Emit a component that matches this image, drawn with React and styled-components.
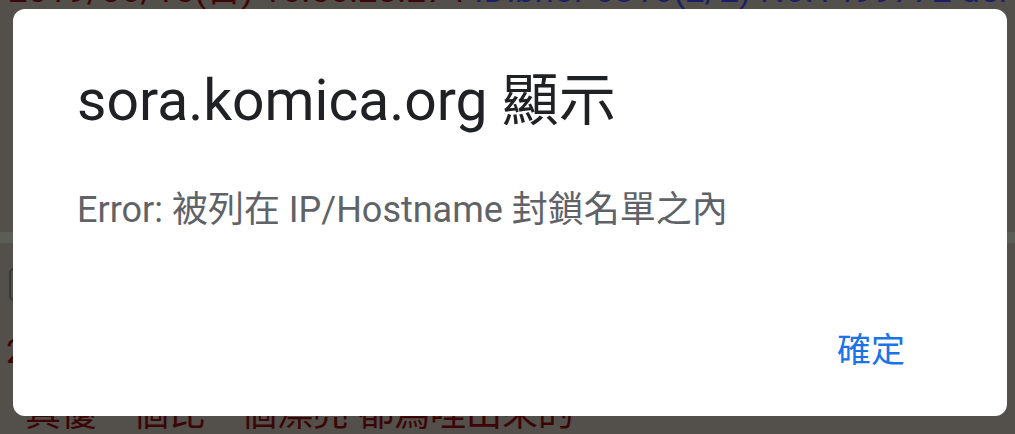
import React from "react";
import styled, { createGlobalStyle } from "styled-components";

const Global = createGlobalStyle`
  html, body { margin: 0; padding: 0; }
  body {
    background: #534f4b;
    font-family: Roboto, "Noto Sans CJK TC", sans-serif;
    overflow: hidden;
    width: 1015px;
    height: 434px;
  }
`;

const Page = styled.div`
  width: 1015px;
  height: 434px;
  display: flex;
  flex-direction: column;
  overflow: hidden;
`;

const PostHead = styled.div`
  margin-top: -29px;
  padding-left: 8px;
  font-size: 35px;
  line-height: 40px;
  white-space: nowrap;
  color: #3e0707;
`;

const IdPart = styled.span`
  color: #1c1f66;
`;

const Band = styled.div`
  margin-top: 221px;
  height: 11px;
  background: #5b5d57;
`;

const QuoteBox = styled.div`
  margin-top: 25px;
  margin-left: 9px;
  width: 40px;
  height: 30px;
  border-radius: 5px;
  border: 2px solid #3a3836;
`;

const Digit = styled.div`
  margin-top: 33px;
  padding-left: 6px;
  font-size: 34px;
  line-height: 34px;
  color: #3e0707;
`;

const PostBody = styled.div`
  margin-top: 26px;
  padding-left: 25px;
  font-size: 36px;
  line-height: 40px;
  white-space: nowrap;
  color: #3c0505;
`;

const Dialog = styled.div`
  position: fixed;
  left: 13px;
  top: 9px;
  width: 994px;
  height: 407px;
  box-sizing: border-box;
  background: #ffffff;
  border-radius: 12px;
  padding: 0 64px;
  display: flex;
  flex-direction: column;
`;

const Title = styled.h1`
  margin: 58px 0 0;
  font-weight: 400;
  font-size: 57px;
  line-height: 68px;
  color: #202124;
  white-space: nowrap;
`;

const Message = styled.p`
  margin: 54px 0 0;
  font-size: 36px;
  line-height: 42px;
  color: #5f6368;
  white-space: nowrap;
`;

const Actions = styled.div`
  margin-top: auto;
  margin-bottom: 44px;
  display: flex;
  justify-content: flex-end;
`;

const Button = styled.button`
  border: none;
  background: none;
  padding: 0 38px 0 0;
  font-family: Roboto, "Noto Sans CJK TC", sans-serif;
  font-size: 34px;
  line-height: 44px;
  color: #1a73e8;
  cursor: pointer;
`;

export default function App() {
  return (
    <>
      <Global />
      <Page>
        <PostHead>
          2019/06/15(日) 16:56:28.274 <IdPart>ID:bnor 6816(2/2) No.1499772 del</IdPart>
        </PostHead>
        <Band />
        <QuoteBox />
        <Digit>2</Digit>
        <PostBody>真優一個比一個漂亮 都爲哩出來的</PostBody>
      </Page>
      <Dialog role="dialog">
        <Title>sora.komica.org 顯示</Title>
        <Message>Error: 被列在 IP/Hostname 封鎖名單之內</Message>
        <Actions>
          <Button>確定</Button>
        </Actions>
      </Dialog>
    </>
  );
}
